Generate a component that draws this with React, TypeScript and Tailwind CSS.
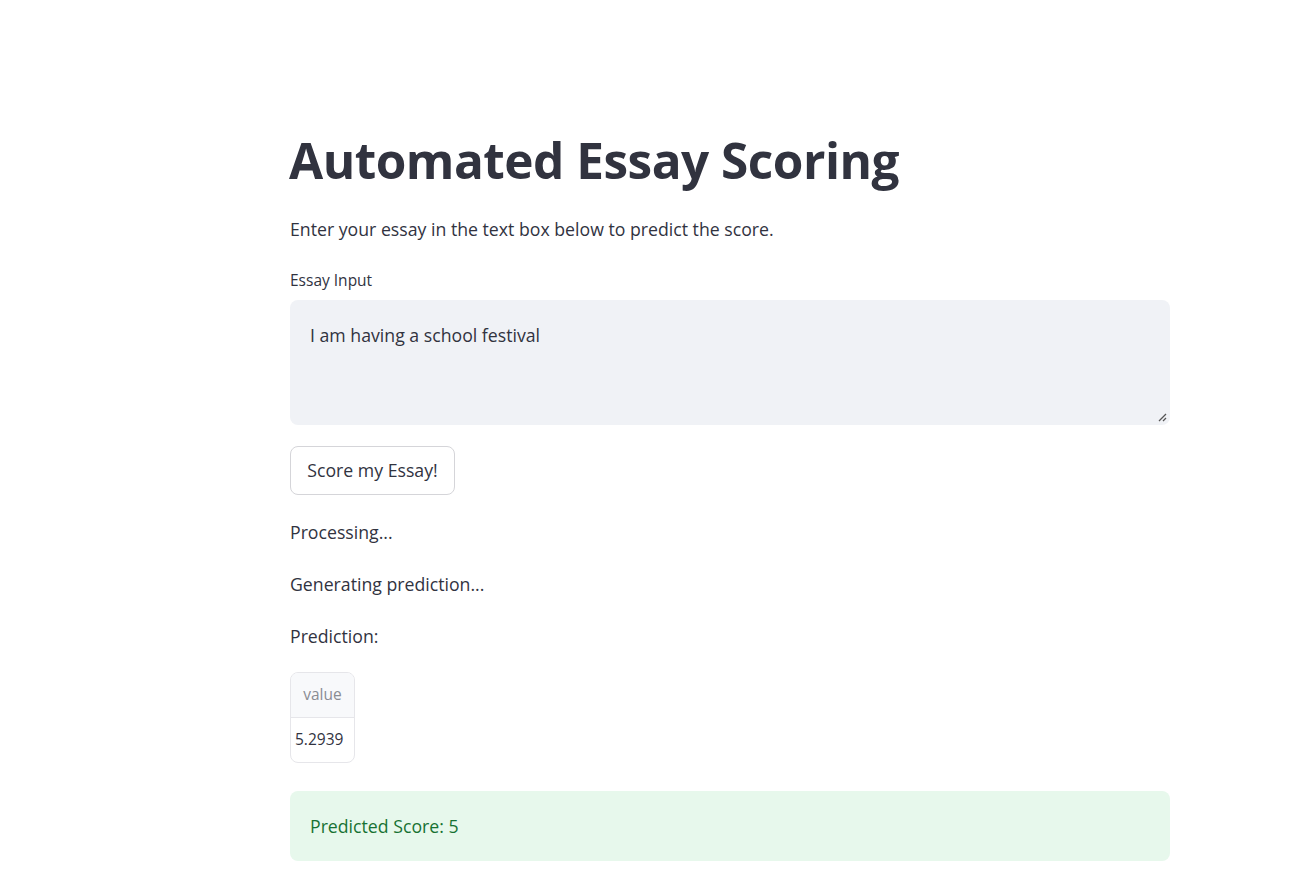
import { useState } from "react";

const font = { fontFamily: '"Open Sans", "Noto Sans", sans-serif' };

export default function App() {
    const [essay, setEssay] = useState("I am having a school festival");

    return (
        <div className="min-h-screen bg-white text-[#31333F] font-['Open_Sans','Noto_Sans',sans-serif]">
            <main className="ml-[290px] w-[880px] pt-[120px] pb-10">
                {/* Title */}
                <h1 className="text-[49.5px] leading-[80px] font-bold tracking-[-0.5px] text-[#31333F] -ml-[1px]">
                    Automated Essay Scoring
                </h1>

                <p className="mt-[17px] text-[17.7px] leading-[24px]">
                    Enter your essay in the text box below to predict the score.
                </p>

                {/* Text area */}
                <label className="block mt-[29px] text-[15.5px] leading-[20px]">Essay Input</label>
                <div className="relative mt-[10px]">
                    <textarea
                        value={essay}
                        onChange={(e) => setEssay(e.target.value)}
                        className="block w-full h-[125px] resize-none rounded-lg bg-[#F0F2F6] px-5 pt-[23px] text-[17.7px] leading-[24px] text-[#31333F] outline-none"
                        style={font}
                    />
                    <svg className="absolute right-[3px] bottom-[3px]" width="9" height="9" viewBox="0 0 9 9">
                        <path d="M1 8 L8 1 M5 8 L8 5" stroke="#555" strokeWidth="1.3" />
                    </svg>
                </div>

                {/* Button */}
                <button className="mt-[21px] h-[49px] w-[165px] rounded-lg border border-[#D5D5D9] bg-white text-[17.7px] text-[#31333F]">
                    Score my Essay!
                </button>

                <div className="mt-[25px] flex flex-col gap-[28px] text-[17.7px] leading-[24px]">
                    <p>Processing...</p>
                    <p>Generating prediction...</p>
                    <p>Prediction:</p>
                </div>

                {/* Dataframe */}
                <div className="mt-[24px] w-[65px] rounded-lg border border-[#E6E6EA] overflow-hidden text-[15.5px]">
                    <div className="h-[45px] flex items-center justify-center bg-[#F8F9FB] text-[#8A8C93] border-b border-[#E6E6EA]">
                        value
                    </div>
                    <div className="h-[44px] flex items-center pl-[4px]">5.2939</div>
                </div>

                {/* Success */}
                <div className="mt-[28px] h-[70px] rounded-lg bg-[#E7F8EC] flex items-center px-5 text-[17.7px] text-[#177233]">
                    Predicted Score: 5
                </div>
            </main>
        </div>
    );
}
